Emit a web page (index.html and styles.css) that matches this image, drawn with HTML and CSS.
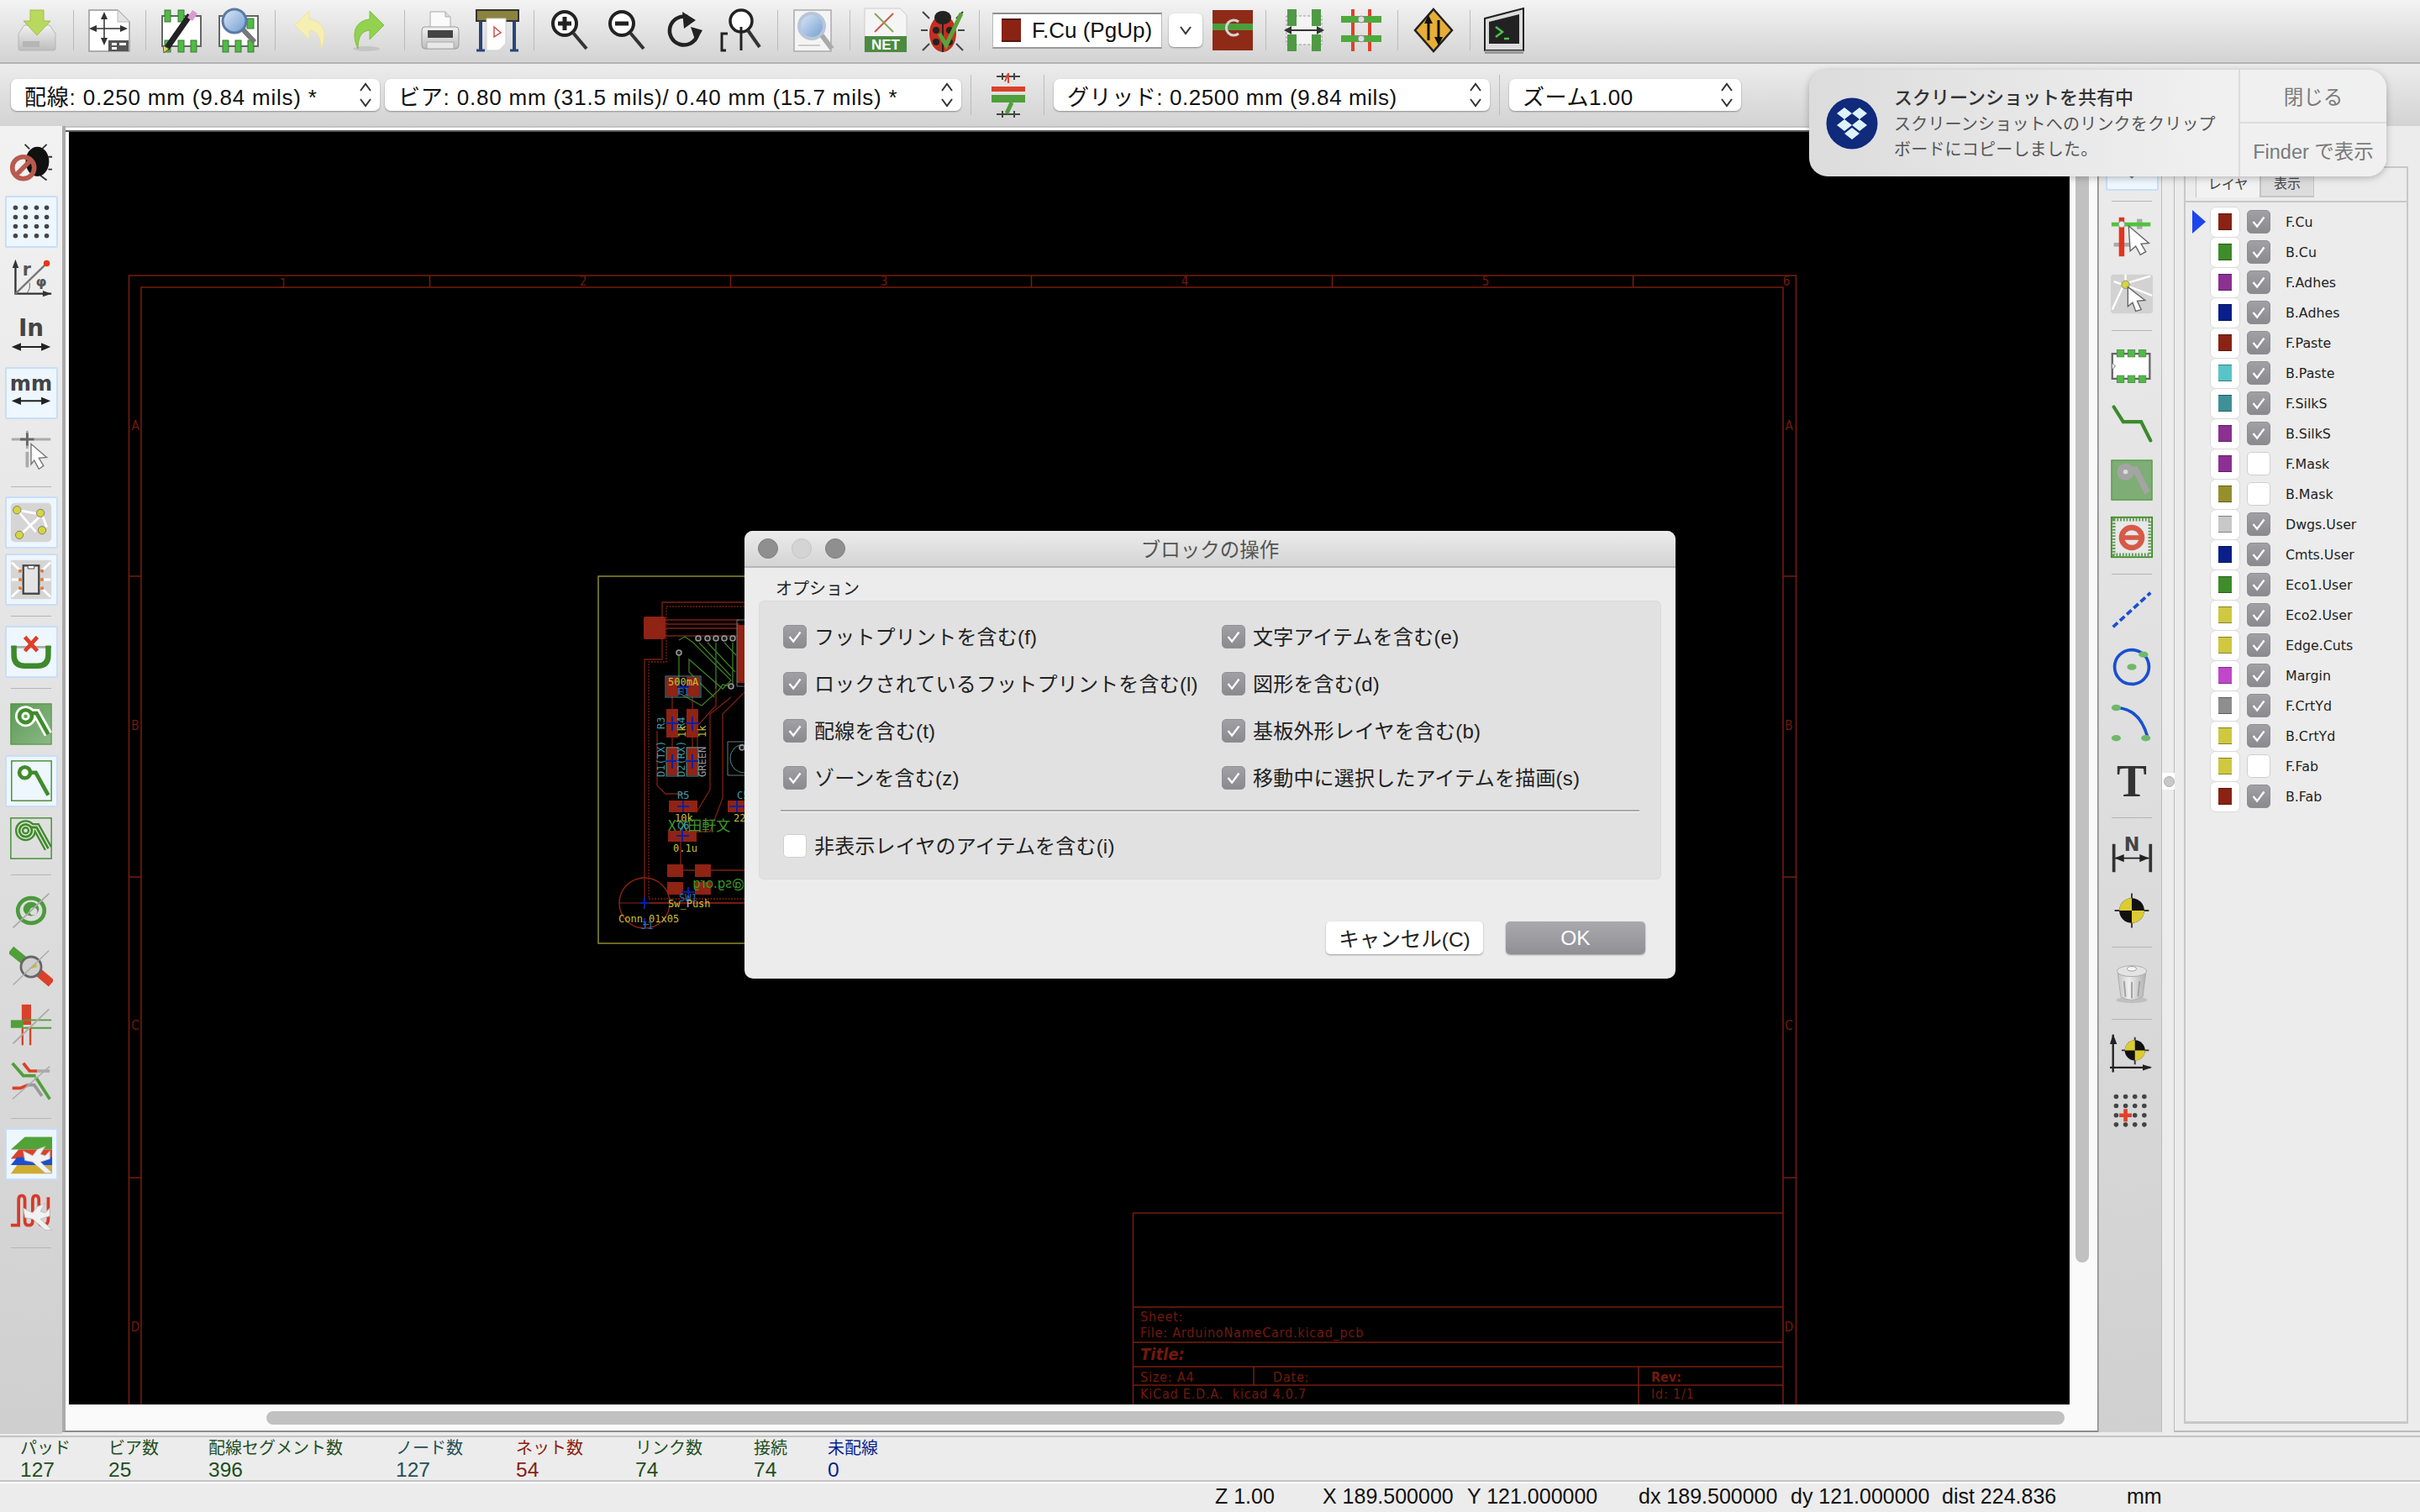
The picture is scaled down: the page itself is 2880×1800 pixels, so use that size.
FILE: index.html
```html
<!DOCTYPE html>
<html lang="ja">
<head>
<meta charset="utf-8">
<title>Pcbnew</title>
<link rel="stylesheet" href="styles.css">
</head>
<body>
<svg class="defs" width="0" height="0" aria-hidden="true">
  <defs>
    <linearGradient id="gSilver" x1="0" y1="0" x2="0" y2="1"><stop offset="0" stop-color="#f2f2f2"/><stop offset="1" stop-color="#bdbdbd"/></linearGradient>
    <linearGradient id="gTrash" x1="0" y1="0" x2="1" y2="0"><stop offset="0" stop-color="#c4c4c4"/><stop offset=".4" stop-color="#eeeeee"/><stop offset="1" stop-color="#b0b0b0"/></linearGradient>
    <linearGradient id="gGlass" x1="0" y1="0" x2="1" y2="1"><stop offset="0" stop-color="#dfeaf7"/><stop offset="1" stop-color="#6f9bd0"/></linearGradient>
    <linearGradient id="gZone" x1="0" y1="0" x2="1" y2="1"><stop offset="0" stop-color="#5c9a55"/><stop offset="1" stop-color="#8cb888"/></linearGradient>
  </defs>
</svg>

<header class="toolbar main-bar">
  <div class="tool"><svg viewBox="0 0 56 56"><path d="M6 32 13 22H43L50 32V50Q50 52 48 52H8Q6 52 6 50Z" fill="url(#gSilver)" stroke="#b5b5b5"/><path d="M6 33H50" stroke="#ddd"/><rect x="11" y="41" width="20" height="7" fill="#b5b5b5"/><path d="M20 4H36V17H44L28 34 12 17H20Z" fill="#b8d95e" stroke="#9dbf45"/></svg></div>
  <i class="sep"></i>
  <div class="tool"><svg viewBox="0 0 56 56"><path d="M4 4H38L52 18V53H4Z" fill="#fff" stroke="#999" stroke-width="1.5"/><path d="M38 4V18H52" fill="#e4e4e4" stroke="#bbb"/><path d="M22 9V44M8 26H46" stroke="#333" stroke-width="1.5"/><path d="M22 6 26 15H18ZM22 46 26 37H18ZM4 26 13 22V30ZM50 26 41 22V30Z" fill="#333"/><rect x="27" y="40" width="24" height="13" fill="#555"/><rect x="31" y="43" width="6" height="3" fill="#fff"/><rect x="40" y="43" width="8" height="3" fill="#fff"/><rect x="31" y="48" width="6" height="3" fill="#fff"/></svg></div>
  <i class="sep"></i>
  <div class="tool"><svg viewBox="0 0 56 56"><rect x="5" y="11" width="46" height="36" fill="#fff" stroke="#666" stroke-width="2"/><g fill="#4fbb45" stroke="#3a7a35"><rect x="8" y="4" width="7" height="14"/><rect x="24" y="4" width="7" height="14"/><rect x="8" y="40" width="7" height="14"/><rect x="24" y="40" width="7" height="14"/><rect x="39" y="40" width="7" height="14"/></g><path d="M10 50 38 10" stroke="#222" stroke-width="7"/><path d="M35 13 41 4 47 8 41 17Z" fill="#d99ad6"/><path d="M7 55 6 46 13 50Z" fill="#e8d860" stroke="#555"/></svg></div>
  <div class="tool"><svg viewBox="0 0 56 56"><rect x="5" y="11" width="46" height="36" fill="#fff" stroke="#666" stroke-width="2"/><g fill="#4fbb45" stroke="#3a7a35"><rect x="38" y="14" width="8" height="12"/><rect x="9" y="40" width="7" height="14"/><rect x="24" y="40" width="7" height="14"/><rect x="39" y="40" width="7" height="14"/></g><path d="M32 26 47 42" stroke="#777" stroke-width="6"/><circle cx="23" cy="17" r="14" fill="url(#gGlass)" stroke="#5a7aa5" stroke-width="3"/></svg></div>
  <i class="sep"></i>
  <div class="tool"><svg viewBox="0 0 56 56"><path d="M9 22 26 5V15C40 16 50 28 40 50 40 36 36 29 26 28V39Z" fill="#f6efb4" stroke="#eee3a0"/></svg></div>
  <div class="tool"><svg viewBox="0 0 56 56"><ellipse cx="26" cy="50" rx="16" ry="3" fill="#c4c4c4"/><path d="M47 22 30 5V15C16 16 6 28 16 50 16 36 20 29 30 28V39Z" fill="#92d24f" stroke="#7fbf3f"/></svg></div>
  <i class="sep"></i>
  <div class="tool"><svg viewBox="0 0 56 56"><path d="M16 6H34L40 12V28H16Z" fill="#fafafa" stroke="#aaa"/><path d="M34 6V12H40" fill="#ddd" stroke="#aaa"/><rect x="6" y="24" width="44" height="26" rx="4" fill="url(#gSilver)" stroke="#999"/><rect x="13" y="28" width="30" height="9" fill="#444"/><rect x="12" y="42" width="32" height="8" fill="#e8e8e8" stroke="#aaa"/></svg></div>
  <div class="tool"><svg viewBox="0 0 56 56"><rect x="3" y="4" width="50" height="13" fill="#8a8340" stroke="#333" stroke-width="2"/><path d="M6 17H10V52H6ZM46 17H50V52H46Z" fill="#2c4478"/><path d="M3 52H13M43 52H53" stroke="#2c4478" stroke-width="3"/><path d="M15 14H38V44L30 52H15Z" fill="#fff" stroke="#ccc"/><path d="M24 24 32 31 24 36Z" fill="none" stroke="#c9584a" stroke-width="1.5"/></svg></div>
  <i class="sep"></i>
  <div class="tool"><svg viewBox="0 0 56 56"><circle cx="22" cy="20" r="14" fill="#fff" stroke="#222" stroke-width="4"/><path d="M32 31 48 50" stroke="#333" stroke-width="4"/><path d="M22 12V28M14 20H30" stroke="#222" stroke-width="5"/></svg></div>
  <div class="tool"><svg viewBox="0 0 56 56"><circle cx="22" cy="20" r="14" fill="#fff" stroke="#222" stroke-width="4"/><path d="M32 31 48 50" stroke="#333" stroke-width="4"/><path d="M14 20H30" stroke="#222" stroke-width="5"/></svg></div>
  <div class="tool"><svg viewBox="0 0 56 56"><path d="M32 12A17 17 0 1 0 44 34" fill="none" stroke="#222" stroke-width="4.5"/><path d="M26 6 42 16 28 26ZM36 24 50 28 42 42Z" fill="#222"/></svg></div>
  <div class="tool"><svg viewBox="0 0 56 56"><circle cx="28" cy="17" r="13" fill="#fff" stroke="#222" stroke-width="3.5"/><path d="M36 28 50 48" stroke="#333" stroke-width="4"/><path d="M28 24V52M12 32H5V52H10" fill="none" stroke="#222" stroke-width="3"/></svg></div>
  <i class="sep"></i>
  <div class="tool"><svg viewBox="0 0 56 56"><rect x="5" y="4" width="44" height="49" fill="#f4f4f4" stroke="#aaa" stroke-width="1.5"/><circle cx="26" cy="23" r="15" fill="url(#gGlass)" stroke="#b8c6d8" stroke-width="4"/><path d="M38 34 50 50" stroke="#aaa" stroke-width="6"/><path d="M10 46H36" stroke="#ccc" stroke-width="2"/></svg></div>
  <i class="sep"></i>
  <div class="tool"><svg viewBox="0 0 56 56"><path d="M3 2H45L53 10V54H3Z" fill="#f5f5f5" stroke="#ccc"/><path d="M37 8 15 30" stroke="#c9584a" stroke-width="2"/><path d="M15 8 37 30" stroke="#89a35a" stroke-width="2"/><rect x="3" y="35" width="50" height="19" fill="#4c8a3f"/><text class="net-text" x="28" y="51">NET</text></svg></div>
  <div class="tool"><svg viewBox="0 0 56 56"><path d="M12 14 4 6M44 14 52 6M10 28H2M46 28H54M12 44 4 52M44 44 52 52" stroke="#444" stroke-width="2"/><ellipse cx="28" cy="32" rx="16" ry="22" fill="#c22f22"/><path d="M28 10V54" stroke="#222" stroke-width="2"/><ellipse cx="28" cy="13" rx="10" ry="8" fill="#222"/><circle cx="20" cy="28" r="4" fill="#222"/><circle cx="36" cy="28" r="4" fill="#222"/><circle cx="20" cy="42" r="4" fill="#222"/><circle cx="36" cy="42" r="4" fill="#222"/><path d="M24 32 32 46 50 8" fill="none" stroke="#5ba33a" stroke-width="5"/></svg></div>
  <i class="sep"></i>
  <div class="layer-select"><span class="layer-chip"></span><span>F.Cu (PgUp)</span></div>
  <div class="layer-drop"><svg viewBox="0 0 18 12" width="18" height="12"><path d="M3 2 9 10 15 2" fill="none" stroke="#333" stroke-width="2"/></svg></div>
  <div class="tool tool-tight"><svg viewBox="0 0 48 48"><rect width="48" height="48" fill="#8f2a17"/><rect y="16" width="48" height="8" fill="#4d9c3a"/><path d="M31 14A9 9 0 1 0 31 28" fill="none" stroke="#d4d4d4" stroke-width="3"/></svg></div>
  <i class="sep sep-b"></i>
  <div class="tool"><svg viewBox="0 0 56 56"><rect x="7" y="11" width="42" height="34" fill="#f4f4f4" stroke="#999" stroke-dasharray="3 2"/><g fill="#4f9a45"><rect x="8" y="3" width="11" height="20"/><rect x="37" y="3" width="11" height="20"/><rect x="8" y="33" width="11" height="20"/><rect x="37" y="33" width="11" height="20"/></g><path d="M8 28H48" stroke="#333" stroke-width="2"/><path d="M4 28 13 23V33ZM52 28 43 23V33Z" fill="#333"/></svg></div>
  <div class="tool"><svg viewBox="0 0 56 56"><path d="M18 3V53M38 3V53" stroke="#e0402a" stroke-width="4"/><path d="M4 15H52M4 38H52" stroke="#4fa83c" stroke-width="8"/><circle cx="28" cy="15" r="4" fill="#ddd" stroke="#888"/><circle cx="28" cy="38" r="4" fill="#ddd" stroke="#888"/></svg></div>
  <i class="sep sep-c"></i>
  <div class="tool"><svg viewBox="0 0 56 56"><path d="M28 3 50 28 28 53 6 28Z" fill="#e7ae35" stroke="#222" stroke-width="2.5"/><path d="M22 16V40M34 16V40" stroke="#111" stroke-width="3"/><path d="M22 10 27 20H17ZM34 46 29 36H39Z" fill="#111"/></svg></div>
  <i class="sep sep-c"></i>
  <div class="tool"><svg viewBox="0 0 56 56"><path d="M3 14 49 2V52H3Z" fill="#ddd" stroke="#222" stroke-width="2"/><path d="M8 18 44 9V44H8Z" fill="#222"/><path d="M16 24 24 30 16 36M26 38H32" fill="none" stroke="#4cc24c" stroke-width="2.5"/><rect x="3" y="52" width="46" height="4" fill="#999"/></svg></div>
</header>

<div class="toolbar aux-bar">
  <div class="combo combo-track"><span>配線: 0.250 mm (9.84 mils) *</span><svg class="updown" viewBox="0 0 16 32"><path d="M2 11 8 3 14 11M2 21 8 29 14 21" fill="none" stroke="#333" stroke-width="2"/></svg></div>
  <div class="combo combo-via"><span>ビア: 0.80 mm (31.5 mils)/ 0.40 mm (15.7 mils) *</span><svg class="updown" viewBox="0 0 16 32"><path d="M2 11 8 3 14 11M2 21 8 29 14 21" fill="none" stroke="#333" stroke-width="2"/></svg></div>
  <i class="sep sep-aux"></i>
  <div class="aux-tool"><svg viewBox="0 0 56 56" width="56" height="56"><g stroke="#444" stroke-width="2"><path d="M14 6H42M14 51H42"/><path d="M21 2V10M35 2V10M21 47V55M35 47V55"/></g><path d="M28 2V14M28 2 24 12" stroke="#e0402a" fill="none" stroke-width="2"/><rect x="8" y="18" width="40" height="6" fill="#d9412a"/><rect x="8" y="28" width="40" height="9" fill="#4f9f3a"/><path d="M32 37 26 50" stroke="#4f9f3a" stroke-width="5"/></svg></div>
  <i class="sep sep-aux"></i>
  <div class="combo combo-grid"><span>グリッド: 0.2500 mm (9.84 mils)</span><svg class="updown" viewBox="0 0 16 32"><path d="M2 11 8 3 14 11M2 21 8 29 14 21" fill="none" stroke="#333" stroke-width="2"/></svg></div>
  <i class="sep sep-aux"></i>
  <div class="combo combo-zoom"><span>ズーム1.00</span><svg class="updown" viewBox="0 0 16 32"><path d="M2 11 8 3 14 11M2 21 8 29 14 21" fill="none" stroke="#333" stroke-width="2"/></svg></div>
</div>

<main class="workarea">
  <nav class="side-bar left-bar">
    <div class="vtool"><svg viewBox="0 0 56 56"><path d="M26 8 20 2M42 8 48 2M50 18H55M50 34H55M40 42 48 48" stroke="#333" stroke-width="2"/><ellipse cx="36" cy="24" rx="15" ry="19" fill="#111"/><circle cx="18" cy="32" r="14" fill="none" stroke="#b95a4e" stroke-width="6"/><path d="M8 42 28 22" stroke="#b95a4e" stroke-width="6"/></svg></div>
    <div class="vtool on"><svg viewBox="0 0 56 56"><g fill="#444"><circle cx="8" cy="10" r="3"/><circle cx="21" cy="10" r="3"/><circle cx="35" cy="10" r="3"/><circle cx="48" cy="10" r="3"/><circle cx="8" cy="22" r="3"/><circle cx="21" cy="22" r="3"/><circle cx="35" cy="22" r="3"/><circle cx="48" cy="22" r="3"/><circle cx="8" cy="34" r="3"/><circle cx="21" cy="34" r="3"/><circle cx="35" cy="34" r="3"/><circle cx="48" cy="34" r="3"/><circle cx="8" cy="46" r="3"/><circle cx="21" cy="46" r="3"/><circle cx="35" cy="46" r="3"/><circle cx="48" cy="46" r="3"/></g></svg></div>
    <div class="vtool"><svg viewBox="0 0 56 56"><path d="M8 8V47H54" fill="none" stroke="#333" stroke-width="2.5"/><path d="M8 3 4 14H12ZM54 47 43 43V51Z" fill="#333"/><path d="M8 47 47 9" stroke="#777" stroke-width="2.5"/><circle cx="48" cy="8" r="4" fill="#e8331c"/><path d="M22 47A16 16 0 0 0 26 33" fill="none" stroke="#555"/><text class="polar-r" x="17" y="24">r</text><text class="polar-p" x="34" y="38">φ</text></svg></div>
    <div class="vtool"><svg viewBox="0 0 56 56"><text class="unit-in" x="28" y="28">In</text><path d="M10 42H46" stroke="#222" stroke-width="2"/><path d="M3 42 15 37V47ZM53 42 41 37V47Z" fill="#222"/></svg></div>
    <div class="vtool on"><svg viewBox="0 0 56 56"><text class="unit-text" x="28" y="25">mm</text><path d="M10 38H46" stroke="#222" stroke-width="2"/><path d="M3 38 15 33V43ZM53 38 41 33V43Z" fill="#222"/></svg></div>
    <div class="vtool"><svg viewBox="0 0 56 56"><path d="M3 14H20M32 14H53M23 3V26" stroke="#aaa" stroke-width="3"/><path d="M14 14H32M23 6V22" stroke="#666" stroke-width="3"/><path d="M23 30V50" stroke="#aaa" stroke-width="4"/><path d="M28 20 48 37 38 38 44 48 38 52 32 41 28 46Z" fill="#fff" stroke="#777" stroke-width="1.5"/></svg></div>
    <i class="vsep"></i>
    <div class="vtool on"><svg viewBox="0 0 56 56"><rect x="2" y="3" width="52" height="50" rx="5" fill="#d5d5d5"/><path d="M10 12 42 18M10 12 34 40M14 44 42 18 48 34" fill="none" stroke="#fff" stroke-width="3"/><g fill="#d6d53a" stroke="#777"><circle cx="10" cy="12" r="5"/><circle cx="40" cy="16" r="5"/><circle cx="13" cy="44" r="5"/><circle cx="42" cy="38" r="5"/></g></svg></div>
    <div class="vtool on"><svg viewBox="0 0 56 56"><rect x="2" y="3" width="52" height="50" rx="2" fill="#d5d5d5"/><path d="M3 6 18 20M53 6 38 20M3 50 18 36M53 50 38 36M3 28H16M53 28H40" stroke="#fff" stroke-width="3"/><rect x="18" y="10" width="20" height="36" fill="#e4e4e4" stroke="#444" stroke-width="2.5"/><path d="M24 10H32V14H24Z" fill="#fff" stroke="#444"/><g fill="#e07a30"><rect x="12" y="15" width="4" height="4"/><rect x="12" y="26" width="4" height="4"/><rect x="12" y="37" width="4" height="4"/><rect x="40" y="15" width="4" height="4"/><rect x="40" y="26" width="4" height="4"/><rect x="40" y="37" width="4" height="4"/></g></svg></div>
    <i class="vsep"></i>
    <div class="vtool on"><svg viewBox="0 0 56 56"><path d="M2 22H54" stroke="#aaa" stroke-width="3"/><path d="M6 20V32Q6 46 20 46H36Q50 46 50 32V20" fill="none" stroke="#3c8a2c" stroke-width="7"/><path d="M20 9 36 27M36 9 20 27" stroke="#e03c28" stroke-width="5"/></svg></div>
    <i class="vsep"></i>
    <div class="vtool"><svg viewBox="0 0 56 56"><rect x="2" y="2" width="52" height="52" fill="url(#gZone)" stroke="#3f8c2a"/><g fill="none" stroke="#fff" stroke-width="11"><circle cx="21" cy="18" r="8"/><path d="M28 14H35L50 41"/></g><g fill="none" stroke="#3f8c2a" stroke-width="5"><circle cx="21" cy="18" r="8"/><path d="M28 14H35L50 41"/></g></svg></div>
    <div class="vtool on"><svg viewBox="0 0 56 56"><rect x="3" y="2" width="51" height="51" fill="none" stroke="#3f8c2a" stroke-width="1.5"/><path d="M20 17H34L50 46" fill="none" stroke="#3f8c2a" stroke-width="5"/><circle cx="20" cy="17" r="7" fill="#fff" stroke="#3f8c2a" stroke-width="5"/></svg></div>
    <div class="vtool"><svg viewBox="0 0 56 56"><rect x="2" y="2" width="52" height="52" fill="none" stroke="#3f8c2a" stroke-width="1.5"/><g fill="none" stroke="#3f8c2a" stroke-width="11"><circle cx="21" cy="18" r="8"/><path d="M28 14H35L50 41"/></g><g fill="none" stroke="#e4e4e4" stroke-width="6"><circle cx="21" cy="18" r="8"/><path d="M28 14H35L50 41"/></g><g fill="none" stroke="#3f8c2a" stroke-width="3"><circle cx="21" cy="18" r="8"/><path d="M28 14H35L50 41"/></g></svg></div>
    <i class="vsep"></i>
    <div class="vtool"><svg viewBox="0 0 56 56"><ellipse cx="28" cy="28" rx="17" ry="16" fill="none" stroke="#4b9a3d" stroke-width="5"/><ellipse cx="28" cy="26" rx="10" ry="9" fill="#4b9a3d"/><circle cx="31" cy="29" r="5" fill="#ddd"/><path d="M5 50 51 6" stroke="#aaa" stroke-width="2"/></svg></div>
    <div class="vtool"><svg viewBox="0 0 56 56"><path d="M2 5 28 26" stroke="#4f9f3a" stroke-width="11"/><path d="M28 26 54 48" stroke="#d9412a" stroke-width="11"/><circle cx="28" cy="27" r="13" fill="#cfcfcf" stroke="#666" stroke-width="3"/><path d="M25 30 34 22 36 27Z" fill="#cdbb30"/><path d="M5 50 51 6" stroke="#aaa" stroke-width="1.5"/></svg></div>
    <div class="vtool"><svg viewBox="0 0 56 56"><rect x="16" y="2" width="12" height="26" fill="#d9412a"/><rect x="2" y="22" width="16" height="10" fill="#4f9f3a"/><path d="M18 22H54M18 32H54" stroke="#4f9f3a" stroke-width="2"/><path d="M17 32V54M27 32V54" stroke="#d9412a" stroke-width="2.5"/><path d="M5 52 51 8" stroke="#aaa" stroke-width="2"/></svg></div>
    <div class="vtool"><svg viewBox="0 0 56 56"><path d="M4 4 18 20H34" fill="none" stroke="#4f9f3a" stroke-width="4"/><path d="M18 4 26 14H36" fill="none" stroke="#d9412a" stroke-width="4"/><path d="M36 14H52" stroke="#aaa" stroke-width="4"/><path d="M4 36H14L24 32" fill="none" stroke="#d9412a" stroke-width="4"/><path d="M22 32H32L42 46" fill="none" stroke="#999" stroke-width="4"/><path d="M34 22 52 50" stroke="#4f9f3a" stroke-width="4"/><path d="M4 50 52 8" stroke="#aaa" stroke-width="1.5"/></svg></div>
    <i class="vsep"></i>
    <div class="vtool on"><svg viewBox="0 0 56 56"><path d="M2 22 20 6H55V22Z" fill="#4fa337"/><path d="M2 34 12 22H55V34Z" fill="#d9412a"/><path d="M2 42 10 32H55V42Z" fill="#1a4fd0"/><path d="M2 53 10 42H55V53Z" fill="#d0ab32"/><path d="M18 24 30 30 36 22 46 18 40 28 46 30 52 24 52 34 40 38 55 52 46 52 30 38 20 36Z" fill="#f2f2f2" stroke="#bbb"/></svg></div>
    <div class="vtool"><svg viewBox="0 0 56 56"><path d="M2 46H12V14Q12 8 16 8T20 14V40Q20 46 25 46T30 40V14Q30 8 34 8T38 14V40Q38 46 43 46 50 46 50 38V10" fill="none" stroke="#d63a2a" stroke-width="4"/><path d="M18 24 30 30 36 22 46 18 40 28 46 30 52 24 52 34 40 38 55 52 46 52 30 38 20 36Z" fill="#f2f2f2" stroke="#bbb"/></svg></div>
    <i class="vsep"></i>
  </nav>

  <section class="canvas-frame">
    <div class="canvas">
      <svg class="board" viewBox="82 157 2381 1515" preserveAspectRatio="none">
        <g class="sheet">
          <rect x="153.5" y="328" width="1984" height="1400"/>
          <rect x="168" y="342" width="1954" height="1370"/>
          <path d="M511.5 328V342M869.5 328V342M1227.5 328V342M1585.5 328V342M1943.5 328V342M153.5 686H168M153.5 1044H168M153.5 1402H168M2122 686H2137M2122 1044H2137M2122 1402H2137"/>
          <path class="tb" d="M1348.5 1444H2122M1348.5 1556H2122M1348.5 1598H2122M1348.5 1627H2122M1348.5 1649H2122M1348.5 1444V1672M1492 1627V1649M1950 1627V1672"/>
        </g>
        <g class="sheet-text">
          <text x="337" y="343" class="tick">1</text><text x="694" y="340" class="tick">2</text><text x="1052" y="340" class="tick">3</text><text x="1410" y="340" class="tick">4</text><text x="1768" y="340" class="tick">5</text><text x="2126" y="340" class="tick">6</text>
          <text x="161" y="512" class="tick">A</text><text x="161" y="869" class="tick">B</text><text x="161" y="1226" class="tick">C</text><text x="161" y="1585" class="tick">D</text>
          <text x="2129" y="512" class="tick">A</text><text x="2129" y="869" class="tick">B</text><text x="2129" y="1226" class="tick">C</text><text x="2129" y="1585" class="tick">D</text>
          <text x="1357" y="1573">Sheet:</text>
          <text x="1357" y="1592">File: ArduinoNameCard.kicad_pcb</text>
          <text x="1357" y="1619" class="title">Title:</text>
          <text x="1357" y="1645">Size: A4</text><text x="1515" y="1645">Date:</text><text x="1965" y="1645" class="rev">Rev:</text>
          <text x="1357" y="1665">KiCad E.D.A.  kicad 4.0.7</text><text x="1965" y="1665">Id: 1/1</text>
        </g>
        <g class="pcb">
          <rect class="edge" x="712" y="686" width="300" height="437"/>
          <g class="red-tr">
            <path d="M900 717H788V785H767V1075H900" stroke-width="2"/>
            <path d="M900 722H793V788H772V1070H900" stroke-width="4" stroke-dasharray="2 1.5" stroke="#7d4d1a"/>
            <path d="M792 738H880M792 743H880M792 748H880M792 757H880"/>
            <path d="M800 829V844M824 829V844M800 878V889M824 878V889M852 810V840L830 864V890M870 830 845 850V940L830 965M886 824 860 850V950L845 990H800M782 870V935L792 945H815M810 1002V1029M813 1036H827M846 1036H886"/>
          </g>
          <g class="grn-tr">
            <path d="M808 777V825L835 840 855 822 860 815 870 817M808 762 815 758 825 765 860 800 870 810 860 820 820 785V800L850 830M832 765 870 805M842 765 875 800M852 765V820M862 765 876 780M872 765V815"/>
          </g>
          <g class="pads">
            <rect x="766" y="734" width="26" height="27" rx="2"/>
            <rect x="877" y="744" width="9" height="69"/>
            <rect x="793" y="806" width="14" height="23"/><rect x="817" y="806" width="16" height="23"/>
            <rect x="793" y="844" width="14" height="34"/><rect x="817" y="844" width="14" height="34"/>
            <rect x="793" y="889" width="14" height="34"/><rect x="817" y="889" width="14" height="34"/>
            <rect x="796" y="953" width="34" height="14"/><rect x="795" y="989" width="34" height="13"/><rect x="866" y="953" width="20" height="14"/>
            <rect x="794" y="1029" width="19" height="15"/><rect x="827" y="1029" width="19" height="15"/><rect x="794" y="1050" width="19" height="15"/><rect x="827" y="1050" width="19" height="15"/>
          </g>
          <g class="outline-cy"><rect x="792" y="805" width="42" height="25"/><rect x="793" y="890" width="14" height="34"/><rect x="817" y="890" width="14" height="34"/></g>
          <path class="outline-gr" d="M877 738H886M877 738V817H886M866 883H886M866 923H886M866 883V923"/><circle class="outline-cy" cx="886" cy="903" r="17"/>
          <g class="vias"><circle cx="831" cy="760" r="3"/><circle cx="842" cy="760" r="3"/><circle cx="852" cy="760" r="3"/><circle cx="862" cy="760" r="3"/><circle cx="872" cy="760" r="3"/><circle cx="808" cy="777" r="3"/><circle cx="870" cy="817" r="3"/><circle cx="883" cy="890" r="3"/></g>
          <circle class="j1" cx="767" cy="1075" r="30"/><path class="red-line" d="M737 1075H900"/>
          <path class="blue-x" d="M813 811V826M806 818H820M800 853V870M792 861H808M824 853V870M816 861H832M800 898V915M792 906H808M824 898V915M816 906H832M813 953V967M806 960H820M812 984V1002M805 995H820M868 960H886M877 953V967M819 1056V1080M811 1062H827M767 1068V1082M761 1075H773M767 1093V1106"/>
          <text class="t-y" x="795" y="816">500mA</text><text class="t-b" x="806" y="828">F1</text>
          <text class="t-c" transform="translate(791 868) rotate(-90)">R3</text>
          <text class="t-c" transform="translate(815 868) rotate(-90)">R4</text>
          <text class="t-y" transform="translate(816 878) rotate(-90)">1k</text><text class="t-y" transform="translate(840 878) rotate(-90)">1k</text>
          <text class="t-c" transform="translate(791 925) rotate(-90)">D1(TX)</text><text class="t-c" transform="translate(815 925) rotate(-90)">D2(RX)</text><text class="t-g" transform="translate(840 925) rotate(-90)">GREEN</text>
          <text class="t-c" x="806" y="951">R5</text><text class="t-y" x="803" y="978">10k</text><text class="t-y" x="801" y="1014">0.1u</text><text class="t-c" x="877" y="951">C5</text><text class="t-y" x="873" y="978">22</text>
          <text class="t-green" x="795" y="989">X X田軒文</text><text class="t-c" x="806" y="987">C6</text>
          <text class="t-green2" transform="translate(886 1057) scale(-1 1)">@sg.org</text>
          <text class="t-b" x="808" y="1073">SW1</text><text class="t-y" x="795" y="1080">Sw_Push</text><text class="t-y" x="736" y="1098">Conn_01x05</text><text class="t-b" x="763" y="1106">J1</text>
        </g>
      </svg>
    </div>
    <div class="vscroll"><div class="vthumb"></div></div>
    <div class="hscroll"><div class="hthumb"></div></div>
  </section>

  <nav class="side-bar right-bar">
    <div class="vtool on"><svg viewBox="0 0 56 56"><path d="M18 34 28 44 38 34" fill="none" stroke="#777" stroke-width="3"/></svg></div>
    <i class="vsep"></i>
    <div class="vtool"><svg viewBox="0 0 56 56"><path d="M5 38H30" stroke="#aaa" stroke-width="5"/><path d="M38 5V18" stroke="#aaa" stroke-width="7"/><path d="M2 12H52" stroke="#4fc43a" stroke-width="5"/><path d="M15 3V53" stroke="#e0351f" stroke-width="7"/><circle cx="15" cy="12" r="4" fill="#eee" stroke="#999"/><path d="M24 14 50 36 40 37 46 47 39 51 33 40 26 46Z" fill="#fff" stroke="#666" stroke-width="1.5"/></svg></div>
    <div class="vtool"><svg viewBox="0 0 56 56"><rect x="1" y="3" width="54" height="50" rx="4" fill="#d2d2d2"/><path d="M5 12 20 17M22 14 52 5M16 20 3 48M24 18 54 30M20 18V3" stroke="#fff" stroke-width="2.5"/><circle cx="20" cy="16" r="5" fill="#d6d53a" stroke="#888"/><path d="M23 19 45 36 35 37 40 48 33 50 29 39 23 44Z" fill="#fff" stroke="#666" stroke-width="1.5"/></svg></div>
    <i class="vsep"></i>
    <div class="vtool"><svg viewBox="0 0 56 56"><rect x="3" y="12" width="48" height="32" fill="#fff" stroke="#666" stroke-width="2.5"/><path d="M3 24 7 28 3 32" fill="#fff" stroke="#666"/><g fill="#4fbb45" stroke="#558a50"><rect x="9" y="7" width="9" height="9"/><rect x="23" y="7" width="9" height="9"/><rect x="37" y="7" width="9" height="9"/><rect x="9" y="40" width="9" height="9"/><rect x="23" y="40" width="9" height="9"/><rect x="37" y="40" width="9" height="9"/></g></svg></div>
    <div class="vtool"><svg viewBox="0 0 56 56"><path d="M5 7 17 26H40L52 50" fill="none" stroke="#3c8a2c" stroke-width="4.5" stroke-linecap="round"/></svg></div>
    <div class="vtool"><svg viewBox="0 0 56 56"><rect x="2" y="2" width="52" height="51" fill="#7ead75" stroke="#3f8c2a"/><g fill="none" stroke="#a4a4a4" stroke-width="8"><circle cx="20" cy="17" r="7"/><path d="M27 14H33L48 44"/></g><circle cx="20" cy="17" r="3" fill="#ddd"/></svg></div>
    <div class="vtool"><svg viewBox="0 0 56 56"><rect x="2" y="2" width="52" height="51" fill="#e8e8e8" stroke="#3f8c2a" stroke-width="2"/><rect x="5" y="5" width="46" height="45" fill="none" stroke="#5d9a52" stroke-width="4" stroke-dasharray="2 2"/><circle cx="28" cy="28" r="13" fill="none" stroke="#d75a48" stroke-width="7"/><path d="M17 28H39" stroke="#d75a48" stroke-width="6"/></svg></div>
    <i class="vsep"></i>
    <div class="vtool"><svg viewBox="0 0 56 56"><path d="M4 50 52 6" stroke="#1a4fd0" stroke-width="4" stroke-dasharray="8 4"/></svg></div>
    <div class="vtool"><svg viewBox="0 0 56 56"><circle cx="28" cy="28" r="22" fill="none" stroke="#1a4fd0" stroke-width="4"/><ellipse cx="28" cy="28" rx="6" ry="4" fill="#6fb86a"/><ellipse cx="43" cy="12" rx="6" ry="4" fill="#6fb86a"/></svg></div>
    <div class="vtool"><svg viewBox="0 0 56 56"><path d="M8 7Q38 8 48 44" fill="none" stroke="#1a4fd0" stroke-width="4"/><ellipse cx="8" cy="7" rx="6" ry="4" fill="#6fb86a"/><ellipse cx="8" cy="46" rx="6" ry="4" fill="#6fb86a"/><ellipse cx="46" cy="46" rx="6" ry="4" fill="#6fb86a"/></svg></div>
    <div class="vtool"><svg class="svg-open" viewBox="0 0 56 56"><text class="t-icon" x="28" y="47">T</text></svg></div>
    <i class="vsep"></i>
    <div class="vtool"><svg viewBox="0 0 56 56"><text class="n-icon" x="28" y="25">N</text><path d="M5 16V52M52 16V52" stroke="#333" stroke-width="4"/><path d="M6 34H50" stroke="#222" stroke-width="2"/><path d="M6 34 18 29V39ZM50 34 38 29V39Z" fill="#222"/></svg></div>
    <div class="vtool"><svg viewBox="0 0 56 56"><path d="M6 28H50M28 6V50" stroke="#333" stroke-width="2"/><circle cx="28" cy="28" r="16" fill="#111"/><path d="M28 12A16 16 0 0 0 12 28H28ZM28 44A16 16 0 0 0 44 28H28Z" fill="#dccb33"/></svg></div>
    <i class="vsep"></i>
    <div class="vtool"><svg viewBox="0 0 56 56"><ellipse cx="28" cy="50" rx="20" ry="4" fill="#c0c0c0"/><path d="M10 16 14 46Q28 54 42 46L46 16Q28 24 10 16Z" fill="url(#gTrash)" stroke="#aaa"/><ellipse cx="28" cy="13" rx="19" ry="7" fill="#e4e4e4" stroke="#aaa"/><ellipse cx="28" cy="10" rx="6" ry="3" fill="#f6f6f6" stroke="#999"/><path d="M18 26 20 46M28 27V48M38 26 36 46" stroke="#a0a0a0" stroke-width="2"/></svg></div>
    <i class="vsep"></i>
    <div class="vtool"><svg viewBox="0 0 56 56"><path d="M4 2V50M0 44H52" stroke="#222" stroke-width="2.5"/><path d="M4 1 0 14H9ZM54 44 42 40V48Z" fill="#222"/><path d="M15 22H50M32 5V40" stroke="#333" stroke-width="2"/><circle cx="32" cy="22" r="13" fill="#111"/><path d="M32 9A13 13 0 0 0 19 22H32ZM32 35A13 13 0 0 0 45 22H32Z" fill="#dccb33"/></svg></div>
    <div class="vtool"><svg viewBox="0 0 56 56"><g fill="#444"><circle cx="8" cy="8" r="3"/><circle cx="20" cy="8" r="3"/><circle cx="32" cy="8" r="3"/><circle cx="44" cy="8" r="3"/><circle cx="8" cy="20" r="3"/><circle cx="20" cy="20" r="3"/><circle cx="32" cy="20" r="3"/><circle cx="44" cy="20" r="3"/><circle cx="8" cy="32" r="3"/><circle cx="32" cy="32" r="3"/><circle cx="44" cy="32" r="3"/><circle cx="8" cy="44" r="3"/><circle cx="20" cy="44" r="3"/><circle cx="32" cy="44" r="3"/><circle cx="44" cy="44" r="3"/></g><path d="M20 24V40M12 32H28" stroke="#e0402a" stroke-width="5"/></svg></div>
  </nav>

  <div class="sash"><span class="sash-grip"></span></div>

  <aside class="layer-panel">
    <div class="layer-inner">
      <div class="tabs"><span class="tab tab-on">レイヤ</span><span class="tab">表示</span></div>
      <ul class="layers">
        <li class="layer cur"><i class="swatch"><b class="c-red"></b></i><i class="chk on"><svg viewBox="0 0 28 28"><path d="M7 14 12 20 21 8" fill="none" stroke="#fff" stroke-width="2.5"/></svg></i><span>F.Cu</span></li>
        <li class="layer"><i class="swatch"><b class="c-grn"></b></i><i class="chk on"><svg viewBox="0 0 28 28"><path d="M7 14 12 20 21 8" fill="none" stroke="#fff" stroke-width="2.5"/></svg></i><span>B.Cu</span></li>
        <li class="layer"><i class="swatch"><b class="c-pur"></b></i><i class="chk on"><svg viewBox="0 0 28 28"><path d="M7 14 12 20 21 8" fill="none" stroke="#fff" stroke-width="2.5"/></svg></i><span>F.Adhes</span></li>
        <li class="layer"><i class="swatch"><b class="c-blu"></b></i><i class="chk on"><svg viewBox="0 0 28 28"><path d="M7 14 12 20 21 8" fill="none" stroke="#fff" stroke-width="2.5"/></svg></i><span>B.Adhes</span></li>
        <li class="layer"><i class="swatch"><b class="c-red"></b></i><i class="chk on"><svg viewBox="0 0 28 28"><path d="M7 14 12 20 21 8" fill="none" stroke="#fff" stroke-width="2.5"/></svg></i><span>F.Paste</span></li>
        <li class="layer"><i class="swatch"><b class="c-cya"></b></i><i class="chk on"><svg viewBox="0 0 28 28"><path d="M7 14 12 20 21 8" fill="none" stroke="#fff" stroke-width="2.5"/></svg></i><span>B.Paste</span></li>
        <li class="layer"><i class="swatch"><b class="c-tea"></b></i><i class="chk on"><svg viewBox="0 0 28 28"><path d="M7 14 12 20 21 8" fill="none" stroke="#fff" stroke-width="2.5"/></svg></i><span>F.SilkS</span></li>
        <li class="layer"><i class="swatch"><b class="c-pur"></b></i><i class="chk on"><svg viewBox="0 0 28 28"><path d="M7 14 12 20 21 8" fill="none" stroke="#fff" stroke-width="2.5"/></svg></i><span>B.SilkS</span></li>
        <li class="layer"><i class="swatch"><b class="c-pur"></b></i><i class="chk"></i><span>F.Mask</span></li>
        <li class="layer"><i class="swatch"><b class="c-oli"></b></i><i class="chk"></i><span>B.Mask</span></li>
        <li class="layer"><i class="swatch"><b class="c-lgr"></b></i><i class="chk on"><svg viewBox="0 0 28 28"><path d="M7 14 12 20 21 8" fill="none" stroke="#fff" stroke-width="2.5"/></svg></i><span>Dwgs.User</span></li>
        <li class="layer"><i class="swatch"><b class="c-blu"></b></i><i class="chk on"><svg viewBox="0 0 28 28"><path d="M7 14 12 20 21 8" fill="none" stroke="#fff" stroke-width="2.5"/></svg></i><span>Cmts.User</span></li>
        <li class="layer"><i class="swatch"><b class="c-grn"></b></i><i class="chk on"><svg viewBox="0 0 28 28"><path d="M7 14 12 20 21 8" fill="none" stroke="#fff" stroke-width="2.5"/></svg></i><span>Eco1.User</span></li>
        <li class="layer"><i class="swatch"><b class="c-yel"></b></i><i class="chk on"><svg viewBox="0 0 28 28"><path d="M7 14 12 20 21 8" fill="none" stroke="#fff" stroke-width="2.5"/></svg></i><span>Eco2.User</span></li>
        <li class="layer"><i class="swatch"><b class="c-yel"></b></i><i class="chk on"><svg viewBox="0 0 28 28"><path d="M7 14 12 20 21 8" fill="none" stroke="#fff" stroke-width="2.5"/></svg></i><span>Edge.Cuts</span></li>
        <li class="layer"><i class="swatch"><b class="c-mag"></b></i><i class="chk on"><svg viewBox="0 0 28 28"><path d="M7 14 12 20 21 8" fill="none" stroke="#fff" stroke-width="2.5"/></svg></i><span>Margin</span></li>
        <li class="layer"><i class="swatch"><b class="c-gry"></b></i><i class="chk on"><svg viewBox="0 0 28 28"><path d="M7 14 12 20 21 8" fill="none" stroke="#fff" stroke-width="2.5"/></svg></i><span>F.CrtYd</span></li>
        <li class="layer"><i class="swatch"><b class="c-yel"></b></i><i class="chk on"><svg viewBox="0 0 28 28"><path d="M7 14 12 20 21 8" fill="none" stroke="#fff" stroke-width="2.5"/></svg></i><span>B.CrtYd</span></li>
        <li class="layer"><i class="swatch"><b class="c-yel"></b></i><i class="chk"></i><span>F.Fab</span></li>
        <li class="layer"><i class="swatch"><b class="c-red"></b></i><i class="chk on"><svg viewBox="0 0 28 28"><path d="M7 14 12 20 21 8" fill="none" stroke="#fff" stroke-width="2.5"/></svg></i><span>B.Fab</span></li>
      </ul>
    </div>
  </aside>
</main>

<section class="msg-panel">
  <div class="msg m-pad"><span>パッド</span><b>127</b></div>
  <div class="msg m-via"><span>ビア数</span><b>25</b></div>
  <div class="msg m-seg"><span>配線セグメント数</span><b>396</b></div>
  <div class="msg m-node"><span>ノード数</span><b>127</b></div>
  <div class="msg m-net"><span>ネット数</span><b>54</b></div>
  <div class="msg m-link"><span>リンク数</span><b>74</b></div>
  <div class="msg m-conn"><span>接続</span><b>74</b></div>
  <div class="msg m-un"><span>未配線</span><b>0</b></div>
</section>

<footer class="status-bar">
  <span class="s-z">Z 1.00</span><span class="s-x">X 189.500000</span><span class="s-y">Y 121.000000</span><span class="s-dx">dx 189.500000</span><span class="s-dy">dy 121.000000</span><span class="s-dist">dist 224.836</span><span>mm</span>
</footer>

<div class="dialog">
  <div class="dlg-title">
    <span class="dot"></span><span class="dot dot-off"></span><span class="dot"></span>
    <span class="dlg-name">ブロックの操作</span>
  </div>
  <div class="dlg-body">
    <div class="group-label">オプション</div>
    <div class="group">
      <div class="opts">
        <label class="opt"><i class="chk on"><svg viewBox="0 0 28 28"><path d="M7 14 12 20 21 8" fill="none" stroke="#fff" stroke-width="2.5"/></svg></i><span>フットプリントを含む(f)</span></label>
        <label class="opt"><i class="chk on"><svg viewBox="0 0 28 28"><path d="M7 14 12 20 21 8" fill="none" stroke="#fff" stroke-width="2.5"/></svg></i><span>文字アイテムを含む(e)</span></label>
        <label class="opt"><i class="chk on"><svg viewBox="0 0 28 28"><path d="M7 14 12 20 21 8" fill="none" stroke="#fff" stroke-width="2.5"/></svg></i><span>ロックされているフットプリントを含む(l)</span></label>
        <label class="opt"><i class="chk on"><svg viewBox="0 0 28 28"><path d="M7 14 12 20 21 8" fill="none" stroke="#fff" stroke-width="2.5"/></svg></i><span>図形を含む(d)</span></label>
        <label class="opt"><i class="chk on"><svg viewBox="0 0 28 28"><path d="M7 14 12 20 21 8" fill="none" stroke="#fff" stroke-width="2.5"/></svg></i><span>配線を含む(t)</span></label>
        <label class="opt"><i class="chk on"><svg viewBox="0 0 28 28"><path d="M7 14 12 20 21 8" fill="none" stroke="#fff" stroke-width="2.5"/></svg></i><span>基板外形レイヤを含む(b)</span></label>
        <label class="opt"><i class="chk on"><svg viewBox="0 0 28 28"><path d="M7 14 12 20 21 8" fill="none" stroke="#fff" stroke-width="2.5"/></svg></i><span>ゾーンを含む(z)</span></label>
        <label class="opt"><i class="chk on"><svg viewBox="0 0 28 28"><path d="M7 14 12 20 21 8" fill="none" stroke="#fff" stroke-width="2.5"/></svg></i><span>移動中に選択したアイテムを描画(s)</span></label>
      </div>
      <div class="group-rule"></div>
      <label class="opt"><i class="chk"></i><span>非表示レイヤのアイテムを含む(i)</span></label>
    </div>
    <div class="dlg-actions">
      <button class="btn">キャンセル(C)</button>
      <button class="btn btn-ok">OK</button>
    </div>
  </div>
</div>

<div class="notice">
  <div class="notice-logo"><svg viewBox="0 0 62 62" width="62" height="62"><circle cx="31" cy="31" r="30.5" fill="#102a7c"/><path d="M22 12 31 19 22 26 13 19ZM40 12 49 19 40 26 31 19ZM22 26 31 33 22 40 13 33ZM40 26 49 33 40 40 31 33ZM31 36 40 43 31 50 22 43Z" fill="#def3ff"/></svg></div>
  <div class="notice-text">
    <div class="notice-title">スクリーンショットを共有中</div>
    <div class="notice-body">スクリーンショットへのリンクをクリップ<br>ボードにコピーしました。</div>
  </div>
  <div class="notice-actions"><span>閉じる</span><span>Finder で表示</span></div>
</div>
</body>
</html>
```

FILE: styles.css
```css
* { box-sizing: border-box; }
html, body { margin: 0; padding: 0; }
body {
  width: 2880px; height: 1800px; overflow: hidden; position: relative;
  display: flex; flex-direction: column;
  background: #ececec; color: #111;
  font-family: "Liberation Sans", "Noto Sans CJK JP", sans-serif;
}
i { font-style: normal; display: block; }
svg { display: block; }
.defs { position: absolute; }
.svg-open { overflow: visible; }

/* toolbars */
.toolbar { display: flex; align-items: center; flex: none; }
.main-bar { height: 76px; padding: 0 0 2px 10px; background: linear-gradient(#f3f3f3, #d3d3d3); border-bottom: 2px solid #b3b3b3; box-shadow: inset 0 -1px 0 #d8d8d8; }
.aux-bar { height: 74px; padding-left: 13px; gap: 0; background: linear-gradient(#ececec, #d3d3d3); }
.tool { width: 68px; height: 56px; flex: none; display: flex; justify-content: center; }
.tool svg { width: 56px; height: 56px; }
.tool-tight { width: 48px; height: 48px; margin-left: 12px; }
.tool-tight svg { width: 48px; height: 48px; }
.sep { width: 1px; height: 48px; margin: 0 8px 0 9px; background: #bcbcbc; flex: none; }
.sep-b { margin: 0 11px 0 15px; }
.sep-c { margin: 0 8px 0 9px; }
.sep-aux { margin: 0 11px; height: 48px; }

.layer-select { display: flex; align-items: center; gap: 13px; width: 202px; height: 43px; margin-left: 7px; padding-left: 10px; background: #fff; border: 1px solid #b8b8b8; border-top: 2px solid #8e8e8e; border-bottom: 2px solid #9a9a9a; font-size: 26px; flex: none; white-space: nowrap; }
.layer-chip { width: 23px; height: 28px; background: #8a2313; border-top: 2px solid #5a170d; border-bottom: 2px solid #5a170d; flex: none; }
.layer-drop { display: flex; align-items: center; justify-content: center; width: 40px; height: 40px; margin-left: 8px; background: #fff; border-radius: 6px; box-shadow: 0 1px 2px #888; flex: none; }

.combo { display: flex; align-items: center; justify-content: space-between; height: 38px; padding: 0 9px 0 16px; margin-right: 6px; background: #fff; border-radius: 7px; box-shadow: 0 1px 2px #8c8c8c; font-size: 26px; letter-spacing: .8px; white-space: nowrap; flex: none; }
.combo-track { width: 439px; }
.combo-via { width: 686px; margin-right: 0; }
.combo-grid { width: 519px; margin-right: 0; letter-spacing: .58px; }
.combo-zoom { width: 276px; margin-right: 0; letter-spacing: .58px; }
.updown { width: 16px; height: 32px; flex: none; }
.aux-tool { width: 64px; height: 56px; padding-left: 5px; flex: none; }

/* work area */
.workarea { flex: none; height: 1557px; display: flex; background: #ececec; }
.side-bar { flex: none; display: flex; flex-direction: column; align-items: center; }
.left-bar { width: 74px; padding-top: 12px; background: linear-gradient(#f2f2f2, #cfcfcf); }
.right-bar { width: 76px; padding: 12px 0 0 4px; height: 1555px; background: linear-gradient(#ececec, #d0d0d0); border-left: 1px solid #aaa; border-right: 1px solid #bbb; }
.vtool { width: 63px; height: 62px; margin: 3px 0; display: flex; align-items: center; justify-content: center; flex: none; border: 2px solid transparent; }
.vtool.on { background: #eef6fe; border-color: #c7def8; border-radius: 2px; }
.vtool svg { width: 52px; height: 52px; }
.vsep { width: 48px; height: 1px; margin: 8.5px 0; background: #b5b5b5; flex: none; }

.canvas-frame { flex: none; width: 2423px; height: 1555px; display: grid; grid-template-columns: 2381px 1fr; grid-template-rows: 1515px 1fr; padding: 7px 0 0 4px; border-left: 4px solid #aaa; background: #fafafa; box-shadow: inset 0 2px 0 #c4c4c4, inset 0 5px 0 #fff; border-bottom: 2px solid #8d8d8d; position: relative; }
.canvas { background: #000; overflow: hidden; grid-column: 1; grid-row: 1; }
.canvas-frame::before { content: ""; position: absolute; left: 0; right: 0; top: 5px; height: 2px; background: #5a5a5a; }
.canvas-frame::after { content: ""; position: absolute; right: 0; top: 0; bottom: 0; width: 1px; background: #8d8d8d; }
.board { width: 2381px; height: 1515px; }
.vscroll { grid-column: 2; grid-row: 1 / span 2; padding: 0 0 0 7px; }
.vthumb { width: 16px; height: 1346px; background: #c1c1c1; border-radius: 0 0 8px 8px; }
.hscroll { grid-column: 1; grid-row: 2; padding: 8px 6px 0 235px; }
.hthumb { height: 16px; background: #c1c1c1; border-radius: 8px; }

.sheet rect, .sheet path { fill: none; stroke: #7a1d0e; stroke-width: 1.5; }
.sheet-text text { fill: #74190c; font-family: "DejaVu Sans", sans-serif; font-size: 16px; font-stretch: condensed; letter-spacing: .8px; white-space: pre; }
.sheet-text .tick { font-size: 15px; text-anchor: middle; letter-spacing: 0; }
.sheet-text .title { font-size: 20px; font-weight: 700; font-style: italic; letter-spacing: 0; }
.sheet-text .rev { font-weight: 700; letter-spacing: 0; }
.edge { fill: none; stroke: #8e8a2c; stroke-width: 1.5; }
.red-tr path { fill: none; stroke: #7e2110; stroke-width: 1.3; }
.grn-tr path { fill: none; stroke: #3a7d22; stroke-width: 1.3; }
.pads rect { fill: #8f2314; }
.outline-cy, .outline-cy rect { fill: none; stroke: #4f8f98; stroke-width: 1; }
.outline-gr { fill: none; stroke: #777; stroke-width: 1; }
.vias circle { fill: #222; stroke: #999; stroke-width: 1.5; }
.j1 { fill: none; stroke: #8a2313; stroke-width: 1.5; }
.red-line { fill: none; stroke: #8a2313; stroke-width: 1.2; }
.blue-x { fill: none; stroke: #0c1f9c; stroke-width: 2; }
.pcb text { font-family: "DejaVu Sans Mono", monospace; font-size: 12px; }
.pcb .t-y { fill: #c8c23a; }
.pcb .t-b { fill: #2c6fb0; }
.pcb .t-c { fill: #3f9aa8; }
.pcb .t-g { fill: #999; }
.pcb .t-green { fill: #3c9a28; font-family: "Noto Sans CJK JP", sans-serif; font-size: 17px; }
.pcb .t-green2 { fill: #3c9a28; font-family: "DejaVu Sans", sans-serif; font-size: 15px; }

.net-text { font: 700 17px "Liberation Sans", sans-serif; fill: #fff; text-anchor: middle; }
.polar-r { font: 700 22px "DejaVu Sans", sans-serif; fill: #555; }
.polar-p { font: 700 18px "DejaVu Sans", sans-serif; fill: #555; }
.unit-in { font: 700 30px "DejaVu Sans", sans-serif; fill: #444; text-anchor: middle; }
.unit-text { font: 700 26px "DejaVu Sans", sans-serif; fill: #444; text-anchor: middle; }
.t-icon { font: 700 58px "Liberation Serif", serif; fill: #333; text-anchor: middle; }
.n-icon { font: 700 24px "DejaVu Sans", sans-serif; fill: #444; text-anchor: middle; }

.sash { width: 15px; flex: none; height: 1555px; background: #ececec; position: relative; border-right: 1px solid #bbb; }
.sash-grip { position: absolute; left: 0; top: 770px; width: 15px; height: 20px; background: #fff; }
.sash-grip::after { content: ""; position: absolute; left: 2px; top: 4px; width: 11px; height: 11px; border-radius: 50%; background: #c8c8c8; border: 1px solid #aaa; }

.layer-panel { flex: 1; height: 1555px; padding: 48px 2px 0 11px; border-bottom: 2px solid #bbb; }
.layer-inner { width: 267px; height: 1497px; border: 2px solid #c8c8c8; border-bottom-width: 3px; display: flex; flex-direction: column; }
.tabs { display: flex; height: 41px; padding: 0 0 0 12px; border-bottom: 2px solid #c8c8c8; flex: none; }
.tab { width: 64px; height: 35px; display: flex; align-items: center; justify-content: center; background: #dcdcdc; border-left: 1px solid #c4c4c4; border-right: 1px solid #c4c4c4; border-bottom: 2px solid #c4c4c4; font-size: 16px; color: #444; }
.tab-on { width: 77px; background: #f2f2f2; border-bottom: 0; }
.layers { list-style: none; margin: 0; padding: 5px 0 0 29px; }
.layer { display: flex; align-items: center; height: 36px; position: relative; font: 15.8px "DejaVu Sans", sans-serif; color: #222; }
.layer span { margin-left: 18px; }
.layer.cur::before { content: ""; position: absolute; left: -21px; top: 4px; border-left: 16px solid #1c45f0; border-top: 14px solid transparent; border-bottom: 14px solid transparent; }
.swatch { width: 36px; height: 37px; background: #fff; border: 1px solid #dadada; border-radius: 7px; display: flex; align-items: center; justify-content: center; margin-right: 8px; flex: none; }
.swatch b { display: block; width: 16px; height: 20px; border-top: 1.5px solid rgba(0,0,0,.35); border-bottom: 1.5px solid rgba(0,0,0,.35); }
.c-red { background: #8a2313; } .c-grn { background: #3f8c2a; } .c-pur { background: #8c3092; } .c-blu { background: #0a1f8a; }
.c-cya { background: #58c4c8; } .c-tea { background: #3f9098; } .c-oli { background: #95902b; } .c-lgr { background: #c8c8c8; }
.c-yel { background: #cfc840; } .c-mag { background: #c048c8; } .c-gry { background: #8e8e8e; }

.chk { width: 28px; height: 28px; border-radius: 5px; background: #fff; border: 1px solid #cfcfcf; flex: none; }
.chk.on { background: linear-gradient(#a0a0a5, #89898e); border-color: #8f8f94; }
.chk svg { width: 26px; height: 26px; }

/* message panel + status */
.msg-panel { flex: none; height: 55px; margin-top: 2px; padding-left: 24px; display: flex; border-top: 2px solid #c4c4c4; border-bottom: 2px solid #c4c4c4; background: #ececec; }
.msg { display: flex; flex-direction: column; font-size: 20px; line-height: 26px; color: #1f4f1f; flex: none; }
.msg b { font-weight: 400; font-size: 24.5px; }
.m-pad { width: 105px; } .m-via { width: 119px; } .m-seg { width: 223px; } .m-node { width: 143px; color: #1f5058; }
.m-net { width: 142px; color: #8a1f0f; } .m-link { width: 141px; } .m-conn { width: 88px; } .m-un { color: #0a1f8a; }
.status-bar { flex: 1; display: flex; align-items: center; padding: 0 0 3px 1446px; font-size: 25px; border-top: 2px solid #fafafa; white-space: nowrap; }
.s-z { width: 128px; } .s-x { width: 172px; } .s-y { width: 204px; } .s-dx { width: 181px; } .s-dy { width: 180px; } .s-dist { width: 220px; }

/* dialog */
.dialog { position: absolute; left: 886px; top: 632px; width: 1108px; height: 533px; border-radius: 10px; overflow: hidden; background: #ececec; display: flex; flex-direction: column; }
.dlg-title { height: 44px; flex: none; display: flex; align-items: center; gap: 16px; padding-left: 16px; background: linear-gradient(#ececec, #d4d4d4); border-bottom: 2px solid #b6b6b6; position: relative; }
.dot { width: 24px; height: 24px; border-radius: 50%; background: #8f8f8f; border: 1px solid #7e7e7e; }
.dot-off { background: #d4d4d4; border-color: #c4c4c4; }
.dlg-name { position: absolute; left: 0; right: 0; top: 0; bottom: 0; display: flex; align-items: center; justify-content: center; font-size: 23.5px; color: #555; }
.dlg-body { flex: 1; padding: 13px 17px 0; display: flex; flex-direction: column; }
.group-label { font-size: 20px; line-height: 24px; padding-left: 20px; height: 26px; color: #222; }
.group { height: 332px; background: #e1e1e1; border: 1px solid #dadada; border-radius: 6px; padding: 14px 25px 0 28px; }
.opts { display: grid; grid-template-columns: 522px 1fr; grid-auto-rows: 56px; }
.opt { display: flex; align-items: center; gap: 9px; height: 56px; font-size: 24px; letter-spacing: .2px; color: #222; white-space: nowrap; }
.opt span { margin-top: -3px; }
.group-rule { height: 3px; margin: 10px 0 12px -3px; background: #a9a9a9; border-bottom: 1px solid #fafafa; }
.dlg-actions { display: flex; justify-content: flex-end; gap: 27px; padding: 50px 19px 0 0; }
.btn { height: 39px; width: 187px; border: 0; border-radius: 5px; background: #fff; box-shadow: 0 1px 2px #9a9a9a; font: 24.5px "Liberation Sans", "Noto Sans CJK JP", sans-serif; color: #222; padding: 0; }
.btn-ok { width: 166px; background: linear-gradient(#a9a9ae, #8f8f94); color: #fff; }

/* notification */
.notice { position: absolute; left: 2153px; top: 83px; width: 687px; height: 127px; display: flex; border-radius: 22px; background: linear-gradient(90deg, #dcdcdc, #f0f0f0 70%); box-shadow: 0 2px 8px rgba(0,0,0,.25); color: #444; }
.notice-logo { width: 101px; padding: 33px 0 0 20px; flex: none; }
.notice-text { width: 410px; padding-top: 20px; flex: none; }
.notice-title { font-size: 22px; line-height: 28px; color: #333; font-weight: 500; height: 30px; }
.notice-body { font-size: 20px; letter-spacing: .2px; line-height: 30px; color: #555; white-space: nowrap; }
.notice-actions { flex: 1; display: flex; flex-direction: column; border-left: 2px solid #dcdcdc; font-size: 23.5px; color: #7a7a7a; }
.notice-actions span { display: flex; align-items: center; justify-content: center; height: 62px; white-space: nowrap; }
.notice-actions span + span { border-top: 2px solid #dcdcdc; height: 65px; }
```
